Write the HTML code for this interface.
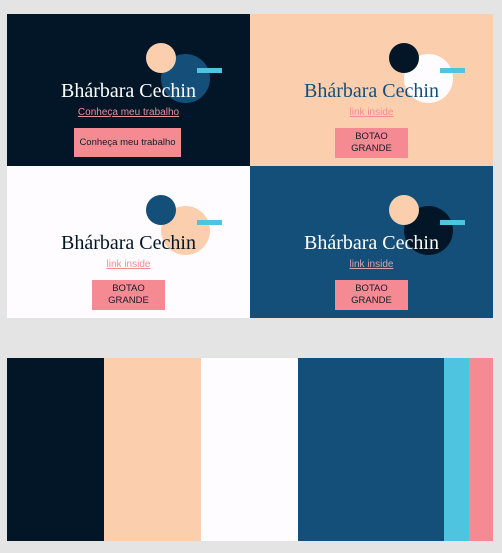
<!DOCTYPE html>
<html><head><style>
*{margin:0;padding:0;box-sizing:border-box}
body{width:502px;height:553px;background:#e4e4e4;position:relative;overflow:hidden;font-family:"Liberation Sans",sans-serif}
.p{position:absolute;width:243px;height:152px;overflow:hidden}
.c{position:absolute;border-radius:50%}
.bar{position:absolute;width:25px;height:5px;background:#4ec4e0}
.t{position:absolute;left:0;width:243px;text-align:center;font-family:"Liberation Serif",serif;font-size:20px;top:64px;line-height:26px}
.l{position:absolute;left:0;width:243px;text-align:center;font-size:10px;top:93px;text-decoration:underline;color:#f58a93}
.b{position:absolute;background:#f58a93;color:#1a1a2a;font-size:9.5px;text-align:center;display:flex;align-items:center;justify-content:center;line-height:12px}
.col{position:absolute;top:358px;height:183px}
</style></head><body>
<div class="p" style="left:7px;top:14px;background:#021627">
 <div class="c" style="left:154px;top:40px;width:49px;height:49px;background:#144f79"></div>
 <div class="c" style="left:139px;top:29px;width:30px;height:30px;background:#fbcfae"></div>
 <div class="bar" style="left:190px;top:54px"></div>
 <div class="t" style="color:#fff">Bhárbara Cechin</div>
 <div class="l" style="color:#e8909a">Conheça meu trabalho</div>
 <div class="b" style="left:67px;top:114px;width:107px;height:29px">Conheça meu trabalho</div>
</div>
<div class="p" style="left:250px;top:14px;background:#fbcfae">
 <div class="c" style="left:154px;top:40px;width:49px;height:49px;background:#fffcff"></div>
 <div class="c" style="left:139px;top:29px;width:30px;height:30px;background:#021627"></div>
 <div class="bar" style="left:190px;top:54px"></div>
 <div class="t" style="color:#144f79">Bhárbara Cechin</div>
 <div class="l">link inside</div>
 <div class="b" style="left:85px;top:114px;width:73px;height:30px">BOTAO<br>GRANDE</div>
</div>
<div class="p" style="left:7px;top:166px;background:#fffcff">
 <div class="c" style="left:154px;top:40px;width:49px;height:49px;background:#fbcfae"></div>
 <div class="c" style="left:139px;top:29px;width:30px;height:30px;background:#144f79"></div>
 <div class="bar" style="left:190px;top:54px"></div>
 <div class="t" style="color:#021627">Bhárbara Cechin</div>
 <div class="l">link inside</div>
 <div class="b" style="left:85px;top:114px;width:73px;height:30px">BOTAO<br>GRANDE</div>
</div>
<div class="p" style="left:250px;top:166px;background:#144f79">
 <div class="c" style="left:154px;top:40px;width:49px;height:49px;background:#021627"></div>
 <div class="c" style="left:139px;top:29px;width:30px;height:30px;background:#fbcfae"></div>
 <div class="bar" style="left:190px;top:54px"></div>
 <div class="t" style="color:#fff">Bhárbara Cechin</div>
 <div class="l" style="color:#d9a0b0">link inside</div>
 <div class="b" style="left:85px;top:114px;width:73px;height:30px">BOTAO<br>GRANDE</div>
</div>
<div class="col" style="left:7px;width:97px;background:#021627"></div>
<div class="col" style="left:104px;width:97px;background:#fbcfae"></div>
<div class="col" style="left:201px;width:97px;background:#fffcff"></div>
<div class="col" style="left:298px;width:146px;background:#144f79"></div>
<div class="col" style="left:444px;width:25px;background:#4ec4e0"></div>
<div class="col" style="left:469px;width:24px;background:#f58a93"></div>
</body></html>
